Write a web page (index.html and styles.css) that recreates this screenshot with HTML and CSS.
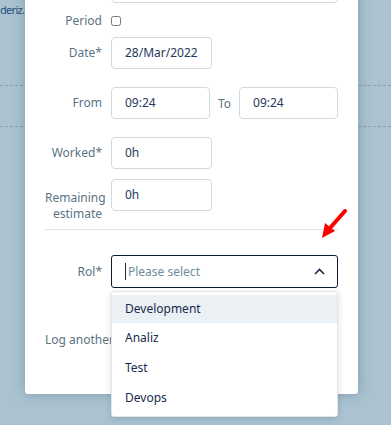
FILE: index.html
```html
<!DOCTYPE html>
<html lang="en">
<head>
    <meta charset="UTF-8">
    <meta name="viewport" content="width=device-width, initial-scale=1.0">
    <title>Log work</title>
    <link rel="stylesheet" href="styles.css">
</head>
<body>
    <div class="page">
        <p class="page-text">deriz.</p>
        <div class="dash dash-one"></div>
        <div class="dash dash-two"></div>
    </div>

    <div class="modal">
        <div class="form-row">
            <label class="form-label"></label>
            <div class="field field-wide"></div>
        </div>
        <div class="form-row row-period">
            <label class="form-label" for="period">Period</label>
            <input type="checkbox" id="period" class="check">
        </div>
        <div class="form-row row-date">
            <label class="form-label">Date*</label>
            <div class="field field-short">28/Mar/2022</div>
        </div>
        <div class="form-row row-time">
            <label class="form-label">From</label>
            <div class="field field-time">09:24</div>
            <span class="to-label">To</span>
            <div class="field field-time">09:24</div>
        </div>
        <div class="form-row row-worked">
            <label class="form-label">Worked*</label>
            <div class="field field-short">0h</div>
        </div>
        <div class="form-row row-remaining">
            <label class="form-label label-two">Remaining estimate</label>
            <div class="field field-short">0h</div>
        </div>
        <div class="divider"></div>
        <div class="form-row row-rol">
            <label class="form-label">Rol*</label>
            <div class="select">
                <span class="placeholder">Please select</span>
                <svg class="chevron" width="11" height="7" viewBox="0 0 11 7">
                    <path d="M1 6 L5.5 1.5 L10 6" fill="none" stroke="#172b4d" stroke-width="1.6"/>
                </svg>
                <ul class="menu">
                    <li class="menu-item active">Development</li>
                    <li class="menu-item">Analiz</li>
                    <li class="menu-item">Test</li>
                    <li class="menu-item">Devops</li>
                </ul>
            </div>
        </div>
        <p class="log-another">Log another</p>

        <svg class="arrow" width="30" height="32" viewBox="0 0 30 32">
            <path d="M27 2 L12 19" stroke="#ff0000" stroke-width="4" stroke-linecap="round"/>
            <polygon points="4,29 7,14 17,22" fill="#ff0000"/>
        </svg>
    </div>
</body>
</html>
```

FILE: styles.css
```css
body {
    margin: 0;
    background-color: #abc3d1;
    font-family: "Noto Sans", "Open Sans", sans-serif;
    font-size: 12px;
    overflow: hidden;
    height: 425px;
}

.page {
    position: relative;
    height: 425px;
}

.page-text {
    margin: 0;
    padding-top: 2px;
    color: #1f4f80;
    font-size: 11px;
    line-height: 16px;
    letter-spacing: -0.7px;
}

.dash {
    position: absolute;
    left: 0;
    right: 0;
    border-top: 1px dashed #8aa2b1;
}

.dash-one {
    top: 85px;
}

.dash-two {
    top: 126px;
}

.modal {
    position: absolute;
    left: 25px;
    top: -45px;
    width: 333px;
    box-sizing: border-box;
    padding: 16px 20px 44px;
    background-color: #fff;
    border-radius: 3px;
    box-shadow: 0 0 14px rgba(20, 50, 80, 0.28);
}

.form-row {
    display: flex;
    align-items: center;
}

.form-label {
    width: 57px;
    margin-right: 9px;
    flex-shrink: 0;
    text-align: right;
    color: #5b7384;
    line-height: 16px;
}

.field {
    box-sizing: border-box;
    height: 32px;
    padding: 0 13px;
    border: 1px solid #d0dbe1;
    border-radius: 4px;
    color: #1e3a5c;
    line-height: 30px;
}

.field-wide {
    width: 227px;
}

.field-short {
    width: 101px;
}

.field-time {
    width: 99px;
}

.to-label {
    margin: 0 8px;
    color: #5b7384;
}

.row-period {
    height: 16px;
    margin-top: 10px;
}

.check {
    width: 10px;
    height: 10px;
    margin: 0;
}

.row-date {
    margin-top: 8px;
}

.row-time {
    margin-top: 18px;
}

.row-worked {
    margin-top: 18px;
}

.row-remaining {
    margin-top: 10px;
    align-items: flex-start;
}

.label-two {
    margin-top: 11px;
}

.divider {
    height: 1px;
    margin-top: 7px;
    background-color: #dfe1e4;
}

.row-rol {
    margin-top: 25px;
}

.select {
    position: relative;
    box-sizing: border-box;
    width: 227px;
    height: 33px;
    padding: 0 13px;
    border: 1px solid #0c1c33;
    border-radius: 3px;
    display: flex;
    align-items: center;
    justify-content: space-between;
}

.placeholder {
    border-left: 1px solid #1a2b40;
    padding-left: 2px;
    color: #6f8c9b;
    line-height: 17px;
}

.chevron {
    margin-right: -1px;
}

.menu {
    position: absolute;
    left: -1px;
    top: 35px;
    width: 227px;
    box-sizing: border-box;
    margin: 0;
    padding: 3px 0;
    list-style: none;
    background-color: #fff;
    border: 1px solid #e4e7ea;
    border-radius: 3px;
    box-shadow: 0 2px 6px rgba(9, 30, 66, 0.15);
    z-index: 2;
}

.menu-item {
    height: 30px;
    padding: 0 13px;
    color: #172b4d;
    line-height: 30px;
}

.menu-item.active {
    height: 28px;
    line-height: 28px;
    background-color: #ebf0f4;
}

.log-another {
    margin: 42px 0 0;
    color: #5b7384;
    line-height: 20px;
}

.arrow {
    position: absolute;
    left: 293px;
    top: 254px;
}
```
